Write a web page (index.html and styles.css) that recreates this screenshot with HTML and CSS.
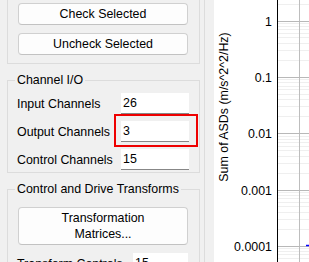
FILE: index.html
```html
<!DOCTYPE html>
<html>
<head>
<meta charset="utf-8">
<link rel="stylesheet" href="styles.css">
</head>
<body>
<div class="app">
  <div class="side">
    <div class="group group-top">
      <button class="btn">Check Selected</button>
      <button class="btn">Uncheck Selected</button>
    </div>
    <fieldset class="group fs">
      <legend>Channel I/O</legend>
      <div class="rows">
        <div class="row"><span class="lbl">Input Channels</span><span class="field">26</span></div>
        <div class="row"><span class="lbl">Output Channels</span><span class="field marked">3</span></div>
        <div class="row"><span class="lbl">Control Channels</span><span class="field">15</span></div>
      </div>
    </fieldset>
    <fieldset class="group fs fs-transforms">
      <legend>Control and Drive Transforms</legend>
      <button class="btn tall">Transformation<br>Matrices...</button>
      <div class="row row-wide"><span class="lbl">Transform Controls</span><span class="field">15</span></div>
    </fieldset>
  </div>
  <div class="splitter"></div>
  <div class="plot">
    <svg class="chart" width="95" height="262" viewBox="0 0 95 262">
      <g class="minor">
        <line x1="64" x2="95" y1="4.5" y2="4.5"/>
        <line x1="64" x2="95" y1="23.5" y2="23.5"/>
        <line x1="64" x2="95" y1="26.5" y2="26.5"/>
        <line x1="64" x2="95" y1="29.5" y2="29.5"/>
        <line x1="64" x2="95" y1="33.5" y2="33.5"/>
        <line x1="64" x2="95" y1="37.5" y2="37.5"/>
        <line x1="64" x2="95" y1="43.5" y2="43.5"/>
        <line x1="64" x2="95" y1="50.5" y2="50.5"/>
        <line x1="64" x2="95" y1="60.5" y2="60.5"/>
        <line x1="64" x2="95" y1="79.5" y2="79.5"/>
        <line x1="64" x2="95" y1="82.5" y2="82.5"/>
        <line x1="64" x2="95" y1="86.5" y2="86.5"/>
        <line x1="64" x2="95" y1="89.5" y2="89.5"/>
        <line x1="64" x2="95" y1="94.5" y2="94.5"/>
        <line x1="64" x2="95" y1="99.5" y2="99.5"/>
        <line x1="64" x2="95" y1="106.5" y2="106.5"/>
        <line x1="64" x2="95" y1="116.5" y2="116.5"/>
        <line x1="64" x2="95" y1="136.5" y2="136.5"/>
        <line x1="64" x2="95" y1="139.5" y2="139.5"/>
        <line x1="64" x2="95" y1="142.5" y2="142.5"/>
        <line x1="64" x2="95" y1="146.5" y2="146.5"/>
        <line x1="64" x2="95" y1="150.5" y2="150.5"/>
        <line x1="64" x2="95" y1="156.5" y2="156.5"/>
        <line x1="64" x2="95" y1="163.5" y2="163.5"/>
        <line x1="64" x2="95" y1="173.5" y2="173.5"/>
        <line x1="64" x2="95" y1="192.5" y2="192.5"/>
        <line x1="64" x2="95" y1="195.5" y2="195.5"/>
        <line x1="64" x2="95" y1="198.5" y2="198.5"/>
        <line x1="64" x2="95" y1="202.5" y2="202.5"/>
        <line x1="64" x2="95" y1="206.5" y2="206.5"/>
        <line x1="64" x2="95" y1="212.5" y2="212.5"/>
        <line x1="64" x2="95" y1="219.5" y2="219.5"/>
        <line x1="64" x2="95" y1="229.5" y2="229.5"/>
        <line x1="64" x2="95" y1="248.5" y2="248.5"/>
        <line x1="64" x2="95" y1="251.5" y2="251.5"/>
        <line x1="64" x2="95" y1="254.5" y2="254.5"/>
        <line x1="64" x2="95" y1="258.5" y2="258.5"/>
      </g>
      <line class="vgrid" x1="85.5" x2="85.5" y1="0" y2="262"/>
      <g class="major">
        <line x1="64" x2="95" y1="21.5" y2="21.5"/>
        <line x1="64" x2="95" y1="77.5" y2="77.5"/>
        <line x1="64" x2="95" y1="133.5" y2="133.5"/>
        <line x1="64" x2="95" y1="190.5" y2="190.5"/>
        <line x1="64" x2="95" y1="246.5" y2="246.5"/>
      </g>
      <line class="axis" x1="63.5" x2="63.5" y1="0" y2="262"/>
      <line class="data" x1="92" x2="95" y1="245.5" y2="245.5"/>
      <g class="ticks">
        <text x="58" y="26">1</text>
        <text x="58" y="82">0.1</text>
        <text x="58" y="138">0.01</text>
        <text x="58" y="195">0.001</text>
        <text x="58" y="251">0.0001</text>
      </g>
      <text class="ylabel" transform="translate(14 107) rotate(-90)">Sum of ASDs (m/s^2^2/Hz)</text>
    </svg>
  </div>
</div>
</body>
</html>
```

FILE: styles.css
```css
html, body {
  margin: 0;
  padding: 0;
}
body {
  background: #f0f0f0;
  font-family: "Liberation Sans", Arial, sans-serif;
  font-size: 12.4px;
  color: #000;
}
.app {
  display: flex;
  width: 309px;
  height: 262px;
  overflow: hidden;
}
.side {
  flex: none;
  width: 205px;
  box-sizing: border-box;
  padding-left: 7px;
  border-right: 1px solid #dcdcdc;
}
.splitter {
  flex: none;
  width: 9px;
}
.plot {
  flex: 1;
  background: #fff;
}
.group {
  width: 193px;
  box-sizing: border-box;
  border: 1px solid #dcdcdc;
  margin: 0;
  padding: 0 11px 0 10px;
  min-width: 0;
}
.group-top {
  border-top: none;
  padding-top: 3px;
  padding-bottom: 8px;
  display: flex;
  flex-direction: column;
  gap: 8px;
}
.fs {
  margin-top: 8px;
  padding-top: 5px;
  padding-bottom: 2px;
}
.fs legend {
  padding: 0 2px;
  margin-left: -3px;
  line-height: 16px;
}
.fs-transforms {
  padding-top: 10px;
}
.btn {
  display: block;
  width: 170px;
  height: 22px;
  box-sizing: border-box;
  margin: 0;
  padding: 0;
  background: #fdfdfd;
  border: 1px solid #d0d0d0;
  border-bottom-color: #c2c2c2;
  border-radius: 4px;
  font: inherit;
  color: #000;
  line-height: 16px;
  text-align: center;
}
.btn.tall {
  height: 38px;
}
.rows {
  display: flex;
  flex-direction: column;
  gap: 7px;
}
.row {
  display: grid;
  grid-template-columns: 103px 68px;
  align-items: center;
  height: 21px;
}
.row-wide {
  margin-top: 8px;
  grid-template-columns: 115px 55px;
}
.lbl {
  margin-left: -1px;
  white-space: nowrap;
}
.field {
  position: relative;
  height: 21px;
  box-sizing: border-box;
  background: #fff;
  border-bottom: 1px solid #878787;
  padding-left: 2px;
  line-height: 21px;
}
.marked::after {
  content: "";
  position: absolute;
  top: -7px;
  left: -7px;
  right: -9px;
  bottom: -6px;
  border: 2px solid #ee0000;
}
.chart {
  display: block;
  font-family: "Liberation Sans", Arial, sans-serif;
  font-size: 12.4px;
}
.minor line {
  stroke: #efefef;
  stroke-width: 1;
}
.major line {
  stroke: #b8b8b8;
  stroke-width: 1;
}
.vgrid {
  stroke: #bdbdbd;
  stroke-width: 1;
}
.axis {
  stroke: #000;
  stroke-width: 1;
}
.data {
  stroke: #0000ff;
  stroke-width: 1.5;
}
.ticks text {
  text-anchor: end;
  fill: #000;
}
.ylabel {
  text-anchor: middle;
  fill: #000;
}
```
